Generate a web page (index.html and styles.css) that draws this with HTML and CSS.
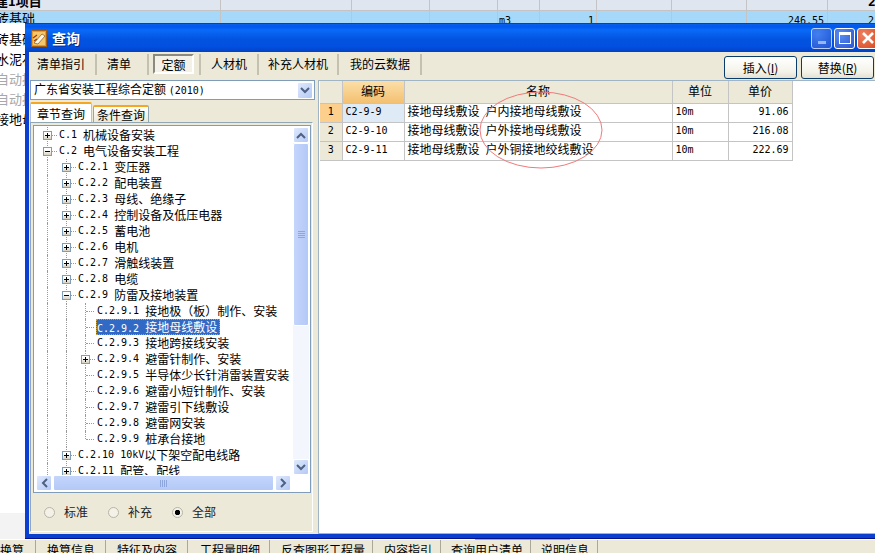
FILE: index.html
```html
<!DOCTYPE html>
<html lang="zh-CN">
  <head>
    <meta charset="UTF-8" />
    <title>查询</title>
    <link rel="stylesheet" href="styles.css">
  </head>
  <body>
    <!-- main app behind the dialog -->
    <div class="app">
      <div class="bg-row bg-head"><span class="c1 head-text">建1项目</span><span class="c2"></span><span class="c3"></span><span class="c4"></span><span class="c5"></span><span class="c6"></span><span class="c7"></span><span class="c8"></span><span class="c9"></span><span class="c10 r"><b>24</b></span></div>
      <div class="bg-row bg-sel"><span class="c1">砖基础</span><span class="c2"></span><span class="c3"></span><span class="c4"></span><span class="c5 lat">m3</span><span class="c6 r lat">1</span><span class="c7"></span><span class="c8"></span><span class="c9 r lat">246.55</span><span class="c10 lat">2</span></div>
      <div class="side-list">
        <div>砖基础</div>
        <div>水泥石</div>
        <div class="muted">自动提</div>
        <div class="muted">自动提</div>
        <div>接地母</div>
      </div>
      <div class="app-gap"></div>
      <div class="bottom-rule"></div>
      <div class="bottom-tabs">
        <span class="first">换算</span>
        <span>换算信息</span>
        <span>特征及内容</span>
        <span>工程量明细</span>
        <span>反查图形工程量</span>
        <span>内容指引</span>
        <span>查询用户清单</span>
        <span>说明信息</span>
      </div>
    </div>

    <!-- dialog -->
    <div class="window">
      <div class="titlebar">
        <svg class="app-icon" width="16" height="17" viewBox="0 0 16 17">
          <rect x="0.5" y="0.5" width="15" height="16" fill="#e89a2c" stroke="#a85c10" />
          <rect x="2" y="2" width="12" height="13" fill="#f6c66a" />
          <path d="M3 13 L11 4 L14 6 L7 14 Z" fill="#fff8e8" stroke="#8a5010" stroke-width="0.7" />
          <path d="M2 8 L6 5 M3 11 L6 9" stroke="#a03808" stroke-width="1.2" fill="none" />
        </svg>
        <span class="title">查询</span>
        <div class="win-btns">
          <div class="win-btn"><i class="min-glyph"></i></div>
          <div class="win-btn"><i class="max-glyph"></i></div>
          <div class="win-btn close">
            <svg width="14" height="14" viewBox="0 0 14 14"><path d="M2 2 L12 12 M12 2 L2 12" stroke="#fff" stroke-width="2.6" /></svg>
          </div>
        </div>
      </div>

      <div class="client">
        <div class="toolbar">
          <span class="tool">清单指引</span>
          <span class="tool">清单</span>
          <span class="tool active-wrap"><span class="active">定额</span></span>
          <span class="tool">人材机</span>
          <span class="tool">补充人材机</span>
          <span class="tool">我的云数据</span>
          <div class="actions">
            <button class="btn">插入(<u>I</u>)</button>
            <button class="btn">替换(<u>R</u>)</button>
          </div>
        </div>

        <div class="panes">
          <div class="left">
            <div class="combo">
              <span class="combo-text">广东省安装工程综合定额 <span class="lat">(2010)</span></span>
              <span class="scroll-btn combo-btn"><svg width="10" height="7" viewBox="0 0 10 7"><path d="M1 1 L5 5 L9 1" class="chev" /></svg></span>
            </div>
            <div class="tabs">
              <span class="tab on">章节查询</span>
              <span class="tab">条件查询</span>
            </div>
            <div class="tab-body">
              <div class="tree-box">
                <div class="tree-top">
                  <div class="tree">
                    <div class="row"><i class="cell box plus"></i><span class="lat">C.1 </span>机械设备安装</div>
                    <div class="row"><i class="cell box minus"></i><span class="lat">C.2 </span>电气设备安装工程</div>
                    <div class="row"><i class="cell guide"></i><i class="cell box plus"></i><span class="lat">C.2.1 </span>变压器</div>
                    <div class="row"><i class="cell guide"></i><i class="cell box plus"></i><span class="lat">C.2.2 </span>配电装置</div>
                    <div class="row"><i class="cell guide"></i><i class="cell box plus"></i><span class="lat">C.2.3 </span>母线、绝缘子</div>
                    <div class="row"><i class="cell guide"></i><i class="cell box plus"></i><span class="lat">C.2.4 </span>控制设备及低压电器</div>
                    <div class="row"><i class="cell guide"></i><i class="cell box plus"></i><span class="lat">C.2.5 </span>蓄电池</div>
                    <div class="row"><i class="cell guide"></i><i class="cell box plus"></i><span class="lat">C.2.6 </span>电机</div>
                    <div class="row"><i class="cell guide"></i><i class="cell box plus"></i><span class="lat">C.2.7 </span>滑触线装置</div>
                    <div class="row"><i class="cell guide"></i><i class="cell box plus"></i><span class="lat">C.2.8 </span>电缆</div>
                    <div class="row"><i class="cell guide"></i><i class="cell box minus"></i><span class="lat">C.2.9 </span>防雷及接地装置</div>
                    <div class="row"><i class="cell guide"></i><i class="cell guide"></i><i class="cell stub"></i><span class="lat">C.2.9.1 </span>接地极（板）制作、安装</div>
                    <div class="row"><i class="cell guide"></i><i class="cell guide"></i><i class="cell stub"></i><span class="sel"><span class="lat">C.2.9.2 </span>接地母线敷设</span></div>
                    <div class="row"><i class="cell guide"></i><i class="cell guide"></i><i class="cell stub"></i><span class="lat">C.2.9.3 </span>接地跨接线安装</div>
                    <div class="row"><i class="cell guide"></i><i class="cell guide"></i><i class="cell box plus"></i><span class="lat">C.2.9.4 </span>避雷针制作、安装</div>
                    <div class="row"><i class="cell guide"></i><i class="cell guide"></i><i class="cell stub"></i><span class="lat">C.2.9.5 </span>半导体少长针消雷装置安装</div>
                    <div class="row"><i class="cell guide"></i><i class="cell guide"></i><i class="cell stub"></i><span class="lat">C.2.9.6 </span>避雷小短针制作、安装</div>
                    <div class="row"><i class="cell guide"></i><i class="cell guide"></i><i class="cell stub"></i><span class="lat">C.2.9.7 </span>避雷引下线敷设</div>
                    <div class="row"><i class="cell guide"></i><i class="cell guide"></i><i class="cell stub"></i><span class="lat">C.2.9.8 </span>避雷网安装</div>
                    <div class="row"><i class="cell guide"></i><i class="cell guide"></i><i class="cell stub last"></i><span class="lat">C.2.9.9 </span>桩承台接地</div>
                    <div class="row"><i class="cell guide"></i><i class="cell box plus"></i><span class="lat">C.2.10 10kV</span>以下架空配电线路</div>
                    <div class="row"><i class="cell guide"></i><i class="cell box plus"></i><span class="lat">C.2.11 </span>配管、配线</div>
                  </div>
                  <div class="vscroll">
                    <span class="scroll-btn"><svg width="10" height="7" viewBox="0 0 10 7"><path d="M1 6 L5 2 L9 6" class="chev" /></svg></span>
                    <div class="vtrack">
                      <div class="vthumb"><i class="grip"></i></div>
                    </div>
                    <span class="scroll-btn"><svg width="10" height="7" viewBox="0 0 10 7"><path d="M1 1 L5 5 L9 1" class="chev" /></svg></span>
                  </div>
                </div>
                <div class="hscroll">
                  <span class="scroll-btn"><svg width="7" height="10" viewBox="0 0 7 10"><path d="M6 1 L2 5 L6 9" class="chev" /></svg></span>
                  <div class="hthumb"><i class="hgrip"></i></div>
                  <span class="scroll-btn"><svg width="7" height="10" viewBox="0 0 7 10"><path d="M1 1 L5 5 L1 9" class="chev" /></svg></span>
                </div>
              </div>
              <div class="radios">
                <label class="radio"><i class="dot"></i>标准</label>
                <label class="radio"><i class="dot"></i>补充</label>
                <label class="radio"><i class="dot checked"></i>全部</label>
              </div>
            </div>
          </div>

          <div class="right">
            <table class="grid">
              <thead>
                <tr>
                  <th class="w-no"></th>
                  <th class="w-code cur">编码</th>
                  <th class="w-name">名称</th>
                  <th class="w-unit">单位</th>
                  <th class="w-price">单价</th>
                </tr>
              </thead>
              <tbody>
                <tr>
                  <td class="no cur">1</td>
                  <td class="lat code-cell cur-cell">C2-9-9</td>
                  <td>接地母线敷设<span class="lat"> </span>户内接地母线敷设</td>
                  <td class="lat">10m</td>
                  <td class="lat r">91.06</td>
                </tr>
                <tr>
                  <td class="no">2</td>
                  <td class="lat code-cell">C2-9-10</td>
                  <td>接地母线敷设<span class="lat"> </span>户外接地母线敷设</td>
                  <td class="lat">10m</td>
                  <td class="lat r">216.08</td>
                </tr>
                <tr>
                  <td class="no">3</td>
                  <td class="lat code-cell">C2-9-11</td>
                  <td>接地母线敷设<span class="lat"> </span>户外铜接地绞线敷设</td>
                  <td class="lat">10m</td>
                  <td class="lat r">222.69</td>
                </tr>
              </tbody>
            </table>
            <!-- red hand-drawn ring on top of the grid -->
            <svg class="ring" width="126" height="80" viewBox="0 0 126 80">
              <ellipse cx="63" cy="40" rx="61" ry="38" fill="none" stroke="#f07a7a" stroke-width="1" />
            </svg>
          </div>
        </div>
      </div>
    </div>
  </body>
</html>
```

FILE: styles.css
```css
* {
  box-sizing: border-box;
}
html,
body {
  margin: 0;
  padding: 0;
  height: 100%;
}
body {
  position: relative;
  width: 875px;
  height: 553px;
  overflow: hidden;
  background: #fff;
  color: #000;
  font-family: "Noto Sans CJK SC", "Liberation Sans", sans-serif;
  font-size: 12px;
  line-height: 16px;
}
.lat {
  font-family: "DejaVu Sans Mono", monospace;
  font-size: 10px;
  white-space: pre;
}
.r {
  text-align: right;
}

/* app behind */
.app {
  display: flex;
  flex-direction: column;
  height: 553px;
}
.bg-row {
  display: flex;
  flex: none;
}
.bg-row span {
  flex: none;
  border-right: 1px solid #c4c4c4;
  overflow: hidden;
  white-space: pre;
}
.bg-head {
  height: 11px;
  background: #dfe6f0;
  border-bottom: 1px solid #c4c4c4;
  line-height: 1px;
}
.bg-head b {
  font-size: 13px;
  line-height: 1px;
  font-family: "DejaVu Sans Mono", monospace;
}
.head-text {
  font-weight: 700;
  font-size: 13px;
  text-indent: -5px;
  line-height: 1px;
}
.bg-sel {
  height: 12px;
  background: #a6d8f9;
}
.bg-sel span {
  line-height: 20px;
}
.bg-sel .c1 {
  text-indent: -4px;
  font-size: 13px;
  line-height: 14px;
}
.c1 { width: 221px; }
.c2 { width: 131px; }
.c3 { width: 78px; }
.c4 { width: 68px; }
.c5 { width: 42px; padding-left: 1px; }
.c6 { width: 57px; padding-right: 2px; }
.c7 { width: 75px; }
.c8 { width: 75px; }
.c9 { width: 81px; padding-right: 3px; }
.c10 { width: 47px; border-right: 0 !important; padding-left: 40px; }
.side-list {
  flex: none;
  width: 25px;
  overflow: hidden;
  padding-top: 6px;
}
.side-list div {
  height: 20px;
  width: 60px;
  font-size: 13px;
  line-height: 20px;
  margin-left: -4px;
}
.side-list .muted {
  color: #a8a8a8;
}
.app-gap {
  flex: 1;
  margin-right: 850px;
  background: linear-gradient(#fff 0, #fff 384px, #f3f3f3 384px);
}
.bottom-rule {
  flex: none;
  height: 1px;
  width: 95px;
  margin-left: 475px;
  background: #a8a8a8;
}
.bottom-tabs {
  flex: none;
  display: flex;
  height: 13px;
  background: #ece9d8;
  overflow: hidden;
}
.bottom-tabs span {
  padding: 0 10px 0 11px;
  border-right: 1px solid #aca899;
  height: 13px;
  line-height: 20px;
  white-space: nowrap;
}
.bottom-tabs .first {
  padding: 0 11px 0 0;
}
.bottom-tabs span:nth-child(4) { padding: 0 9px 0 12px; }
.bottom-tabs span:nth-child(5) { padding: 0 7px 0 11px; }
.bottom-tabs span:nth-child(6) { padding: 0 8px 0 11px; }
.bottom-tabs span:nth-child(7) { padding: 0 7px 0 10px; }
.bottom-tabs span:nth-child(8) { padding: 0 8px 0 10px; }

/* dialog */
.window {
  position: absolute;
  left: 25px;
  top: 23px;
  width: 856px;
  height: 516px;
  display: flex;
  flex-direction: column;
  padding: 0 4px 4px;
  background: #0a3fd0;
  border-top: 1px solid #0b3fb8;
  border-bottom: 1px solid #00138c;
}
.titlebar {
  flex: none;
  display: flex;
  align-items: center;
  height: 28px;
  margin: 0 -4px;
  padding: 0 3px 0 6px;
  background: linear-gradient(#0a5fe8 0, #0058ee 10%, #0a6af8 22%, #0253df 55%, #0350e0 80%, #0142c4 100%);
}
.app-icon {
  flex: none;
}
.title {
  margin-left: 5px;
  color: #fff;
  font-weight: 700;
  font-size: 14px;
  text-shadow: 1px 1px 0 #0a2a90;
}
.win-btns {
  margin-left: auto;
  display: flex;
  gap: 2px;
}
.win-btn {
  width: 21px;
  height: 21px;
  border: 1px solid #fff;
  border-radius: 3px;
  display: flex;
  align-items: center;
  justify-content: center;
  background: radial-gradient(circle at 30% 30%, #5a8cf0, #2a55d0);
}
.win-btn:first-child {
  opacity: 0.72;
}
.win-btn.close {
  background: radial-gradient(circle at 30% 30%, #ee8060, #d84a20);
}
.min-glyph {
  display: block;
  width: 8px;
  height: 3px;
  margin-top: 9px;
  margin-right: -1px;
  background: #cfdcf8;
}
.max-glyph {
  display: block;
  width: 12px;
  height: 12px;
  border: 1px solid #fff;
  border-top-width: 3px;
}
.client {
  flex: 1;
  min-height: 0;
  display: flex;
  flex-direction: column;
  background: #ece9d8;
}
.toolbar {
  flex: none;
  display: flex;
  align-items: flex-start;
  height: 28px;
  padding-top: 2px;
}
.tool {
  height: 21px;
  line-height: 20px;
  padding: 0 10px 0 8px;
  border-right: 2px solid #c4c1b0;
  white-space: nowrap;
}
.tool:nth-child(2) {
  padding: 0 16px 0 10px;
}
.tool:nth-child(3) {
  padding: 0 5px 0 4px;
}
.tool:nth-child(4) {
  padding: 0 10px;
}
.tool:nth-child(5) {
  padding: 0 9px;
}
.tool:nth-child(6) {
  padding: 0 10px 0 11px;
}
.active {
  display: block;
  width: 41px;
  height: 20px;
  text-align: center;
  border: 2px solid;
  border-color: #8a8a80 #fff #fff #8a8a80;
  line-height: 18px;
  background: #f4f2e8;
}
.actions {
  margin-left: auto;
  display: flex;
  gap: 4px;
  padding: 2px 3px 0 0;
}
.btn {
  width: 73px;
  height: 23px;
  padding: 0;
  border: 1px solid #0a3c6c;
  border-radius: 3px;
  background: linear-gradient(#fff, #f4f3ea 70%, #e4e1d2);
  font: inherit;
  color: #000;
}
.panes {
  flex: 1;
  min-height: 0;
  display: flex;
}
.left {
  flex: none;
  width: 285px;
  padding-left: 1px;
}
.combo {
  display: flex;
  align-items: center;
  height: 20px;
  width: 285px;
  background: #fff;
  border: 1px solid #7f9db9;
  padding: 0 1px 0 3px;
}
.combo-text {
  flex: 1;
}
.scroll-btn {
  flex: none;
  display: flex;
  align-items: center;
  justify-content: center;
  width: 16px;
  height: 16px;
  border: 1px solid #fff;
  border-radius: 2px;
  background: linear-gradient(135deg, #dfe9fd, #b5c9f6);
}
.combo-btn {
  height: 17px;
}
.chev {
  fill: none;
  stroke: #4d6185;
  stroke-width: 2;
}
.tabs {
  display: flex;
  align-items: flex-end;
  height: 22px;
  padding-top: 3px;
}
.tab {
  width: 56px;
  height: 17px;
  margin-left: 1px;
  text-align: center;
  line-height: 15px;
  background: linear-gradient(#fff, #ece9d8);
  border: 1px solid #91a7b4;
  border-bottom: 0;
  border-top: 2px solid #f5a623;
  border-radius: 2px 2px 0 0;
}
.tab.on {
  width: 62px;
  height: 20px;
  margin-left: 0;
  background: #fff;
  line-height: 20px;
  position: relative;
  z-index: 1;
  border-color: #f5a623 #b5c3cc #fff #b5c3cc;
}
.tab-body {
  width: 283px;
  height: 410px;
  padding: 2px 1px 0 2px;
  background: #ece9d8;
  border: 1px solid #fff;
  border-top: 1px solid #91a7b4;
  border-left-color: #91a7b4;
}
.tree-box {
  height: 368px;
  width: 278px;
  background: #fff;
  border: 1px solid #7f9db9;
  padding: 1px 1px 1px 2px;
  display: flex;
  flex-direction: column;
}
.tree-top {
  flex: 1;
  min-height: 0;
  display: flex;
}
.tree {
  flex: 1;
  min-width: 0;
  overflow: hidden;
  padding-left: 2px;
}
.row {
  display: flex;
  align-items: center;
  height: 16px;
  white-space: nowrap;
}
.cell {
  display: block;
  position: relative;
  flex: none;
  width: 19px;
  height: 16px;
}
.guide::before,
.stub::before {
  content: "";
  position: absolute;
  left: 9px;
  top: 0;
  bottom: 0;
  border-left: 1px dotted #9a9a9a;
}
.stub::after {
  content: "";
  position: absolute;
  left: 10px;
  top: 8px;
  width: 8px;
  border-top: 1px dotted #9a9a9a;
}
.stub.last::before {
  bottom: 8px;
}
.row > .cell:last-of-type {
  margin-right: 2px;
}
/* expander box: sign, fill, border, then the dotted lines under it */
.box {
  background-repeat: no-repeat;
}
.plus {
  background-image:
    linear-gradient(#000, #000),
    linear-gradient(#000, #000),
    linear-gradient(#fff 30%, #d8d2c0),
    linear-gradient(#7f9db9, #7f9db9),
    repeating-linear-gradient(#9a9a9a 0 1px, transparent 1px 2px),
    repeating-linear-gradient(90deg, #9a9a9a 0 1px, transparent 1px 2px);
  background-size: 5px 1px, 1px 5px, 7px 7px, 9px 9px, 1px 16px, 5px 1px;
  background-position: 7px 8px, 9px 6px, 6px 5px, 5px 4px, 9px 0, 14px 8px;
}
.minus {
  background-image:
    linear-gradient(#000, #000),
    linear-gradient(#fff 30%, #d8d2c0),
    linear-gradient(#7f9db9, #7f9db9),
    repeating-linear-gradient(#9a9a9a 0 1px, transparent 1px 2px),
    repeating-linear-gradient(90deg, #9a9a9a 0 1px, transparent 1px 2px);
  background-size: 5px 1px, 7px 7px, 9px 9px, 1px 16px, 5px 1px;
  background-position: 7px 8px, 6px 5px, 5px 4px, 9px 0, 14px 8px;
}
.sel {
  display: block;
  margin-left: -1px;
  padding: 0 3px 0 1px;
  height: 16px;
  background: #316ac5;
  color: #fff;
  outline: 1px dotted #c8a040;
  outline-offset: -1px;
}
.vscroll {
  flex: none;
  width: 16px;
  display: flex;
  flex-direction: column;
}
.vtrack {
  flex: 1;
  background: #f3f6fd;
}
.vthumb {
  height: 183px;
  border: 1px solid #fff;
  border-radius: 2px;
  background: linear-gradient(90deg, #c4d5fb, #b4c9f8);
  display: flex;
  align-items: center;
  justify-content: center;
}
.grip {
  display: block;
  width: 7px;
  height: 7px;
  background: repeating-linear-gradient(#8da6dc 0 1px, transparent 1px 2px);
}
.hscroll {
  flex: none;
  display: flex;
  height: 16px;
  margin-right: 18px;
  gap: 1px;
}
.hthumb {
  flex: 1;
  border: 1px solid #fff;
  border-radius: 2px;
  background: linear-gradient(#c4d5fb, #b4c9f8);
  display: flex;
  align-items: center;
  justify-content: center;
}
.hgrip {
  display: block;
  width: 8px;
  height: 7px;
  background: repeating-linear-gradient(90deg, #8da6dc 0 1px, transparent 1px 2px);
}
.radios {
  display: flex;
  padding: 11px 0 0 11px;
  gap: 20px;
}
.radio {
  display: flex;
  align-items: center;
  gap: 9px;
  white-space: nowrap;
  color: #222;
}
.dot {
  display: block;
  flex: none;
  width: 11px;
  height: 11px;
  border: 1px solid #b8b4a4;
  border-radius: 50%;
  background: #f4f2e8;
}
.dot.checked {
  background: radial-gradient(circle, #000 0 2.4px, #f4f2e8 3px);
}

/* result grid */
.right {
  position: relative;
  flex: none;
  width: 558px;
  height: 454px;
  margin-left: 4px;
  background: #fff;
  border: 1px solid #9fb5c6;
  border-right: 0;
  padding: 0 0 0 1px;
}
.grid {
  border-collapse: collapse;
  table-layout: fixed;
  width: 472px;
}
.grid th {
  height: 22px;
  font-weight: 400;
  background: #ece9d8;
  border: 1px solid #c4c4c4;
  border-top: 0;
  border-left: 0;
  padding: 0 0 1px;
  line-height: 14px;
}
.grid td {
  height: 19px;
  padding: 0 3px 1px;
  border: 1px solid #c4c4c4;
  border-left: 0;
  line-height: 14px;
  white-space: nowrap;
  overflow: hidden;
}
.w-no { width: 22px; }
.w-code { width: 62px; }
.w-name { width: 268px; }
.w-unit { width: 56px; }
.w-price { width: 64px; }
.grid th.cur {
  background: linear-gradient(#fbdfa8, #f3c070);
}
.grid td.no {
  background: #ece9d8;
  text-align: center;
  font-family: "DejaVu Sans Mono", monospace;
  font-size: 10px;
}
.grid td.no.cur {
  background: #fcd08c;
}
.cur-cell {
  background: #deeaf6;
}
.ring {
  position: absolute;
  left: 159px;
  top: 9px;
}
```
